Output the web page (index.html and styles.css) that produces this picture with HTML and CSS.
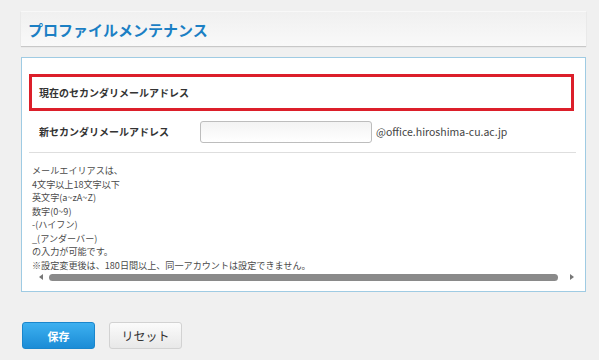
FILE: index.html
```html
<!DOCTYPE html>
<html lang="ja">
<head>
    <meta charset="UTF-8">
    <title>プロファイルメンテナンス</title>
    <link rel="stylesheet" href="styles.css">
</head>
<body>
    <div class="page">
        <div class="page-header">
            <h1>プロファイルメンテナンス</h1>
        </div>

        <div class="panel">
            <div class="row row-current">
                <span class="label">現在のセカンダリメールアドレス</span>
            </div>
            <div class="row row-new">
                <span class="label">新セカンダリメールアドレス</span>
                <input type="text" class="text-input">
                <span class="domain">@office.hiroshima-cu.ac.jp</span>
            </div>

            <div class="note">
                <p>メールエイリアスは、</p>
                <p>4文字以上18文字以下</p>
                <p>英文字(a~zA~Z)</p>
                <p>数字(0~9)</p>
                <p>-(ハイフン)</p>
                <p>_(アンダーバー)</p>
                <p>の入力が可能です。</p>
                <p>※設定変更後は、180日間以上、同一アカウントは設定できません。</p>
            </div>
            <!-- 横スクロールバー -->
            <div class="hscroll">
                <span class="arrow arrow-left"></span>
                <span class="thumb"></span>
                <span class="arrow arrow-right"></span>
            </div>
        </div>

        <div class="actions">
            <button class="btn btn-save">保存</button>
            <button class="btn btn-reset">リセット</button>
        </div>
    </div>
</body>
</html>
```

FILE: styles.css
```css
body {
    margin: 0;
    background: #f0f0f0;
    font-family: "Noto Sans CJK JP", "Noto Sans", sans-serif;
    color: #333;
}
.page {
    width: 565px;
    padding: 11px 0 0 21px;
}
.page-header {
    height: 34px;
    border-top: 1px solid #f8f8f8;
    background: linear-gradient(#f0f0f0, #f9f9f9);
    box-shadow: 0 1px 1px #c8c8c8;
    display: flex;
    align-items: center;
}
.page-header h1 {
    margin: 0 0 0 7px;
    font-size: 15px;
    font-weight: bold;
    color: #1b7fc4;
}
.panel {
    margin-top: 11px;
    background: #fff;
    border: 1px solid #9fcbe3;
    padding: 16px 11px 10px 7px;
    height: 207px;
}
.row {
    display: flex;
    align-items: center;
}
.label {
    font-size: 10px;
    font-weight: bold;
    color: #333;
}
.row-current {
    height: 31px;
    border: 3px solid #dc1f2a;
    padding-left: 7px;
}
.row-new {
    height: 41px;
    padding-left: 10px;
    border-bottom: 1px solid #dedede;
    margin-right: -2px;
}
.row-new .label {
    width: 161px;
}
.text-input {
    box-sizing: border-box;
    width: 172px;
    height: 22px;
    margin: 0;
    border: 1px solid #bdbdbd;
    border-radius: 3px;
    background: linear-gradient(#f3f3f3, #fff);
}
.domain {
    margin-left: 4px;
    font-size: 10.5px;
    color: #444;
}
.note {
    padding: 11px 0 0 3px;
    font-size: 9.1px;
    line-height: 13.5px;
    color: #4a4a4a;
    height: 108px;
}
.note p {
    margin: 0;
    white-space: nowrap;
}
.hscroll {
    display: flex;
    align-items: center;
    height: 10px;
    padding-left: 10px;
}
.arrow {
    width: 0;
    height: 0;
    border-top: 3px solid transparent;
    border-bottom: 3px solid transparent;
}
.arrow-left {
    border-right: 4px solid #777;
}
.arrow-right {
    border-left: 4px solid #777;
    margin-left: 12px;
}
.thumb {
    flex: 1;
    height: 7px;
    margin-left: 6px;
    border-radius: 4px;
    background: #8a8a8a;
}
.actions {
    display: flex;
    gap: 14px;
    padding-top: 30px;
    margin-left: 1px;
}
.btn {
    width: 73px;
    height: 27px;
    border-radius: 3px;
    font-family: inherit;
    font-size: 11px;
    cursor: pointer;
}
.btn-save {
    border: 1px solid #1a86cc;
    background: linear-gradient(#3db0f0, #1b8cd6);
    color: #fff;
    font-weight: bold;
}
.btn-reset {
    border: 1px solid #d2d2d2;
    background: linear-gradient(#fbfbfb, #e8e8e8);
    color: #333;
    font-size: 12px;
}
```
